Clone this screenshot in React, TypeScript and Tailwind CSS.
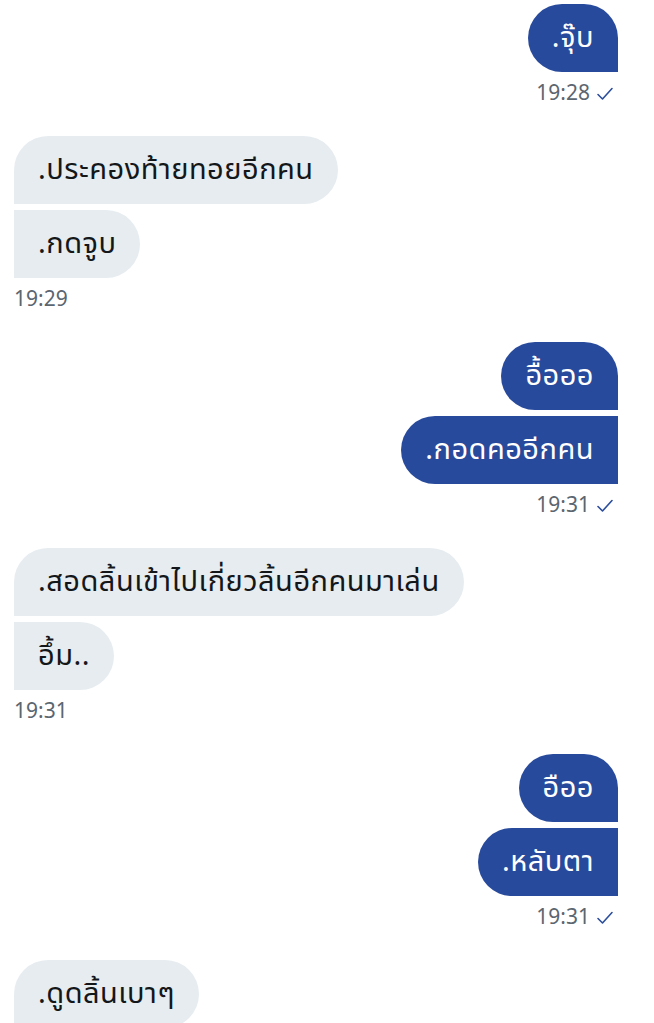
import React from "react";

type Side = "me" | "them";

function Check() {
  return (
    <svg width="18" height="16" viewBox="0 0 18 16" className="ml-[6px]" fill="none">
      <path d="M2 8.5 L6.5 13 L16 2.5" stroke="#2a4d9e" strokeWidth="1.6" strokeLinecap="round" strokeLinejoin="round" />
    </svg>
  );
}

function Group({ side, msgs, time }: { side: Side; msgs: string[]; time?: string }) {
  const me = side === "me";
  return (
    <div className={`flex flex-col ${me ? "items-end" : "items-start"} gap-[6px]`}>
      {msgs.map((m, i) => {
        const first = i === 0;
        let shape = "";
        if (me) {
          shape = first ? "rounded-[34px] rounded-br-none" : "rounded-[34px] rounded-tr-none rounded-br-none";
        } else {
          shape = first ? "rounded-[34px] rounded-bl-none" : "rounded-[34px] rounded-tl-none rounded-bl-none";
        }
        return (
          <div
            key={i}
            className={`h-[68px] flex items-center px-[24px] text-[29px] tracking-[0.5px] leading-none whitespace-nowrap ${shape} ${
              me ? "bg-[#284a9c] text-white" : "bg-[#e6ecf0] text-[#14171a]"
            }`}
          >
            {m}
          </div>
        );
      })}
      {time && (
        <div className={`mt-[4px] h-[24px] flex items-center text-[21px] text-[#5b6670] ${me ? "pr-[4px]" : ""}`}>
          <span>{time}</span>
          {me && <Check />}
        </div>
      )}
    </div>
  );
}

export default function App() {
  return (
    <div
      className="w-[654px] h-[1023px] overflow-hidden bg-white pl-[14px] pr-[36px] pt-[4px] flex flex-col gap-[30px]"
      style={{ fontFamily: '"Noto Sans Thai", "Noto Sans", "DejaVu Sans", sans-serif' }}
    >
      <Group side="me" msgs={[".จุ๊บ"]} time="19:28" />
      <Group side="them" msgs={[".ประคองท้ายทอยอีกคน", ".กดจูบ"]} time="19:29" />
      <Group side="me" msgs={["อื้อออ", ".กอดคออีกคน"]} time="19:31" />
      <Group side="them" msgs={[".สอดลิ้นเข้าไปเกี่ยวลิ้นอีกคนมาเล่น", "อึ้ม.."]} time="19:31" />
      <Group side="me" msgs={["อืออ", ".หลับตา"]} time="19:31" />
      <Group side="them" msgs={[".ดูดลิ้นเบาๆ"]} />
    </div>
  );
}
